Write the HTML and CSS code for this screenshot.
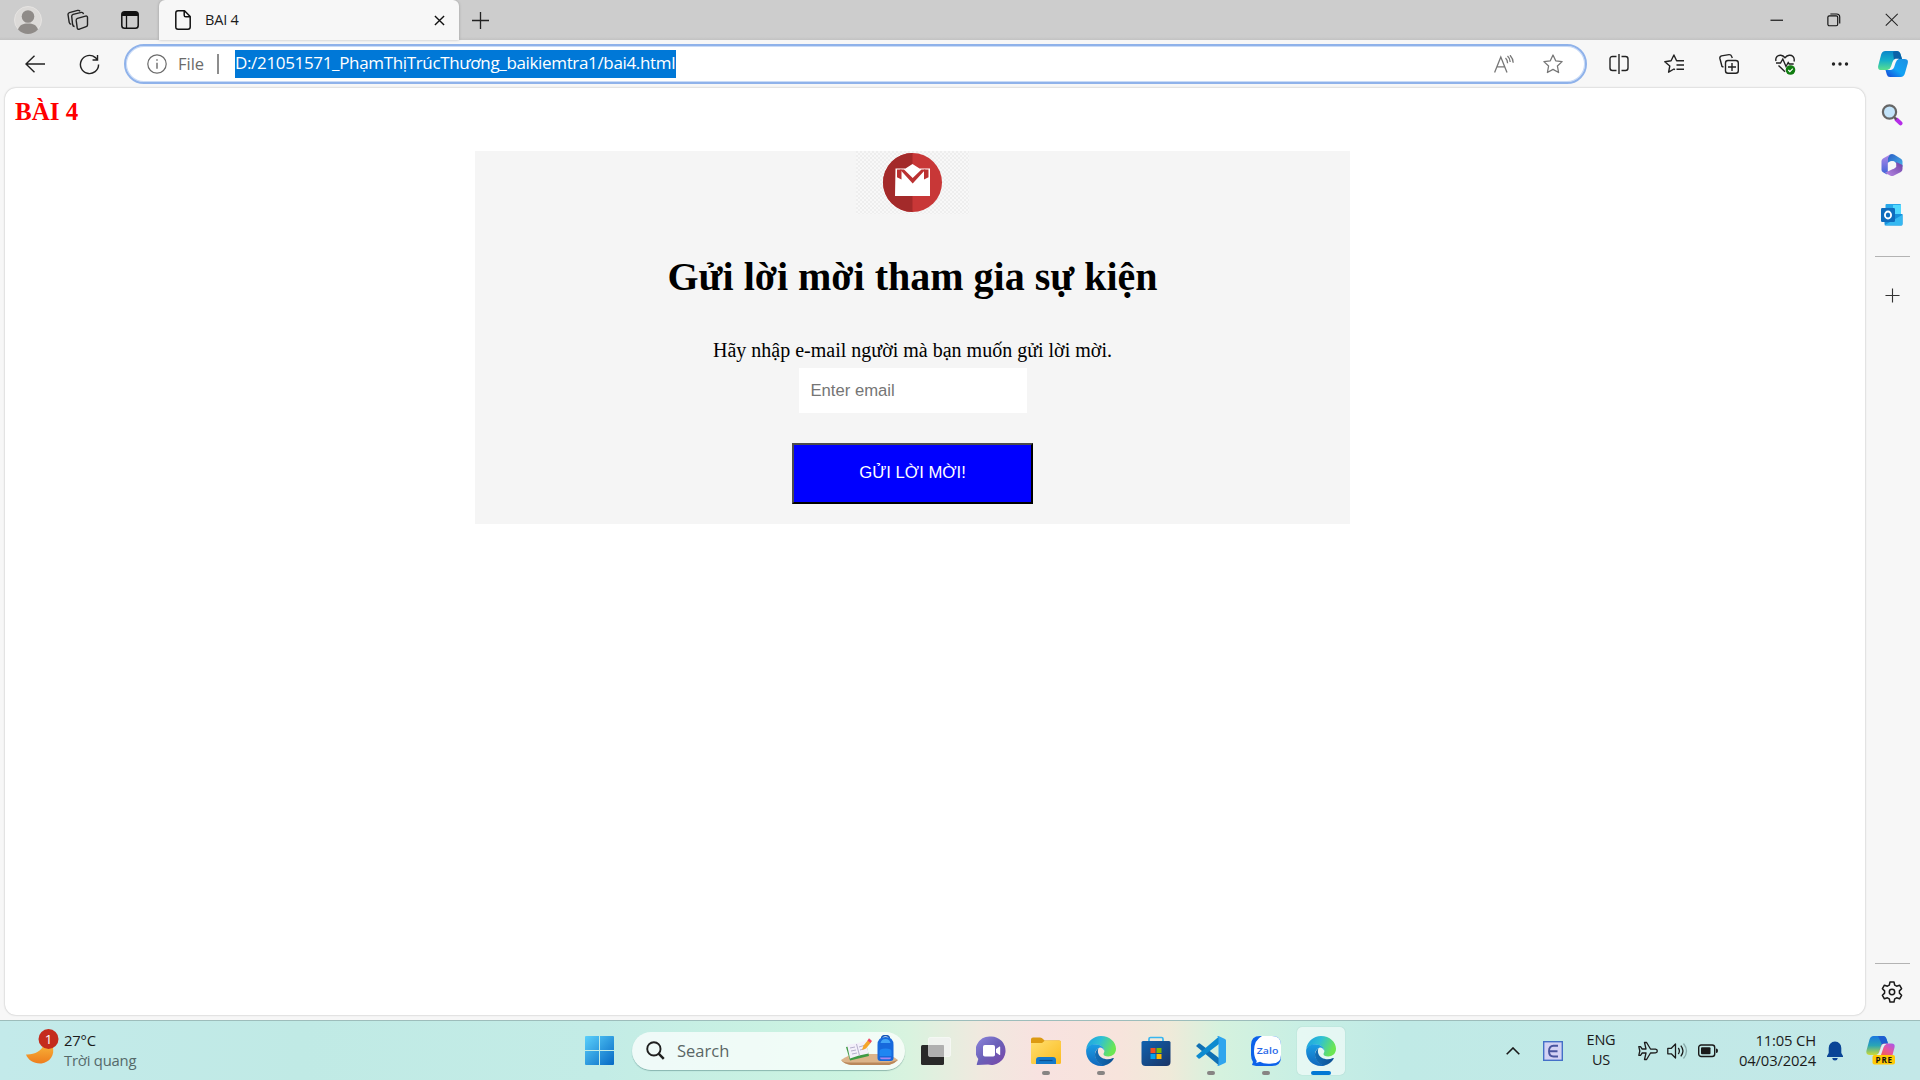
FILE: index.html
```html
<!DOCTYPE html>
<html lang="vi">
<head>
<meta charset="utf-8">
<title>BAI 4</title>
<link rel="stylesheet" href="styles.css">
</head>
<body>
<svg class="defs" width="0" height="0" aria-hidden="true">
  <defs>
    <linearGradient id="edgeTop" x1="0" y1="0" x2="1" y2=".35"><stop offset="0" stop-color="#1b9de2"/><stop offset=".5" stop-color="#2fc0d5"/><stop offset="1" stop-color="#6be653"/></linearGradient>
    <linearGradient id="edgeLeft" x1="0" y1="0" x2="0" y2="1"><stop offset="0" stop-color="#1b9fe5"/><stop offset="1" stop-color="#1168bd"/></linearGradient>
    <linearGradient id="edgeBottom" x1="0" y1="0" x2="1" y2="0"><stop offset="0" stop-color="#1370b8"/><stop offset="1" stop-color="#0c4f92"/></linearGradient>
    <linearGradient id="win" gradientUnits="userSpaceOnUse" x1="0" y1="0" x2="29" y2="29"><stop offset="0" stop-color="#5ad0fb"/><stop offset="1" stop-color="#0669c4"/></linearGradient>
    <linearGradient id="copA" x1="0" y1="0" x2="0" y2="1"><stop offset="0" stop-color="#0a86c9"/><stop offset=".5" stop-color="#16b0c9"/><stop offset="1" stop-color="#5be08d"/></linearGradient>
    <linearGradient id="copB" x1="0" y1="1" x2="1" y2="0"><stop offset="0" stop-color="#1443d6"/><stop offset=".45" stop-color="#12a3f5"/><stop offset="1" stop-color="#1d8fe0"/></linearGradient>
    <linearGradient id="preA" x1="0" y1="0" x2="0" y2="1"><stop offset="0" stop-color="#1a78e0"/><stop offset=".5" stop-color="#2aa5b5"/><stop offset="1" stop-color="#cddb35"/></linearGradient>
    <linearGradient id="preB" x1="0" y1="1" x2="1" y2="0"><stop offset="0" stop-color="#f5603b"/><stop offset=".5" stop-color="#e8569c"/><stop offset="1" stop-color="#a557f0"/></linearGradient>
    <linearGradient id="moon" x1="0" y1="0" x2="0" y2="1"><stop offset="0" stop-color="#f8b53a"/><stop offset="1" stop-color="#ee7d1d"/></linearGradient>
    <linearGradient id="folder" x1="0" y1="0" x2="1" y2="1"><stop offset="0" stop-color="#ffdf70"/><stop offset="1" stop-color="#fbbb1f"/></linearGradient>
    <linearGradient id="chat" x1="0" y1="0" x2="1" y2="1"><stop offset="0" stop-color="#8d86dd"/><stop offset=".5" stop-color="#6a60b8"/><stop offset="1" stop-color="#7a45a8"/></linearGradient>
    <linearGradient id="store" x1="0" y1="0" x2="1" y2="1"><stop offset="0" stop-color="#0f62b0"/><stop offset="1" stop-color="#1b3566"/></linearGradient>
    <linearGradient id="m365a" x1="0" y1="0" x2="0" y2="1"><stop offset="0" stop-color="#b388e8"/><stop offset="1" stop-color="#3b63d8"/></linearGradient>
    <linearGradient id="m365b" x1="0" y1="0" x2="1" y2="1"><stop offset="0" stop-color="#2a5dc6"/><stop offset="1" stop-color="#47b4ea"/></linearGradient>
    <linearGradient id="m365c" x1="0" y1="1" x2="1" y2="0"><stop offset="0" stop-color="#b98be6"/><stop offset="1" stop-color="#6b3fa4"/></linearGradient>
    <pattern id="checks" width="4" height="4" patternUnits="userSpaceOnUse"><rect width="4" height="4" fill="#f8f8f8"/><path d="M0 0h2v2H0zM2 2h2v2H2z" fill="#eeeeee"/></pattern>
    <symbol id="edge" viewBox="0 0 30 30">
      <path d="M0.2 13.5C1 5.5 7.500 0 15 0c8.800 0 15 6.200 15 12.800 0 5-3.800 7.700-7.800 7.700-3.200 0-4.700-1.200-4.700-2.400 0-1 .9-1.300.9-3.100C18.400 11.500 14.500 8.500 9.800 8.500 5 8.500 1.500 11 .2 13.500z" fill="url(#edgeTop)"/>
      <path d="M.2 13.500C2 9.500 5.500 8.200 9.300 8.200c5 0 9.100 3.300 9.100 6.800-1-2.500-3-3.800-5-3.300-3 1-5 4.300-4.300 8.100C10 25 14 28.500 19 29.400 17.800 29.900 16.500 30 15 30 6 30-.8 22.500.2 13.500z" fill="url(#edgeLeft)"/>
      <path d="M12.500 12.200c-2.500 1.800-4 5-3.400 8.200C10 25.500 14.500 29 18.500 29.500c4-.9 7.500-3.500 9.200-6.700.3-.6-.2-.9-.7-.7-6 2.900-13 .3-14.600-4.300-.8-2.200-.5-4.100.1-5.600z" fill="url(#edgeBottom)"/>
    </symbol>
  </defs>
</svg>

<div class="browser">
  <header class="tabstrip">
    <svg class="avatar" viewBox="0 0 28 28"><circle cx="14" cy="14" r="13.500" fill="#dcdad8" stroke="#e6e4e2"/><circle cx="14" cy="10.500" r="6.300" fill="#8f8b88"/><path d="M4 23.500c1.500-4.500 5-6 10-6s8.500 1.500 10 6A13.600 13.600 0 0 1 14 28a13.600 13.600 0 0 1-10-4.500z" fill="#8f8b88"/></svg>
    <svg class="workspaces" viewBox="0 0 22 22" fill="none" stroke="#222" stroke-width="1.400" stroke-linejoin="round"><path d="M10.500 9.300l8-2.200q2-.4 2 1.400v7.500q0 1.200-1.300 1.600l-6.800 2.600q-2 .5-2.200-1.300l-1-7.500q-.1-1.700 1.300-2.100z"/><path d="M7.600 17.500Q6 17.500 5.600 15.500L4.700 7.300q0-1.500 1.400-1.900l8.200-2q1.700-.3 2.200 1.700M4.200 15.200q-1.600 0-2-1.900L1 5.500q0-1.500 1.400-1.900l8.200-2.200q1.700-.3 2.500 1"/></svg>
    <svg class="tabmenu" viewBox="0 0 18 18"><rect x=".8" y=".8" width="16.400" height="16.400" rx="2.800" fill="none" stroke="#111" stroke-width="1.500"/><path d="M1 5V3.500Q1 1 3.500 1h11Q17 1 17 3.500V5z" fill="#111"/><path d="M5.500 5v12" stroke="#111" stroke-width="1.300"/></svg>
    <div class="tab">
      <svg class="doc" viewBox="0 0 16 20" fill="none" stroke="#111" stroke-width="1.500" stroke-linejoin="round"><path d="M3 .8h6.500L15.200 6.500V17q0 2.200-2.200 2.200H3Q.8 19.200.8 17V3Q.8.800 3 .8zM9.200 1v4.200q0 1.600 1.600 1.600H15"/></svg>
      <span class="tab-title">BAI 4</span>
      <svg class="tab-close" viewBox="0 0 12 12" stroke="#111" stroke-width="1.500"><path d="M1 1l10 10M11 1L1 11"/></svg>
    </div>
    <svg class="newtab" viewBox="0 0 18 18" stroke="#222" stroke-width="1.400"><path d="M9 0v18M0 9h18"/></svg>
    <div class="window-buttons">
      <svg viewBox="0 0 14 14"><path d="M.5 7.500h13" stroke="#111" stroke-width="1.200"/></svg>
      <svg viewBox="0 0 14 14" fill="none" stroke="#111" stroke-width="1.200"><rect x=".9" y="3" width="10.200" height="10.200" rx="1.500"/><path d="M3.500 1h6.500q3.200 0 3.200 3.200v6.600"/></svg>
      <svg viewBox="0 0 14 14" stroke="#222" stroke-width="1.100"><path d="M.8.800l12.400 12.400M13.200.8L.8 13.200"/></svg>
    </div>
  </header>

  <nav class="toolbar">
    <svg class="back" viewBox="0 0 20 18" fill="none" stroke="#222" stroke-width="1.400"><path d="M20 9H1M9.500.8L1 9l8.500 8.200"/></svg>
    <svg class="reload" viewBox="0 0 22 22" fill="none" stroke="#222" stroke-width="1.500"><path d="M20.500 11A9.500 9.500 0 1 1 17.200 3.800L19 5.700M19.400 1v5.200h-5.200"/></svg>
    <div class="address">
      <svg class="info" viewBox="0 0 20 20" fill="none" stroke="#6b6b6b" stroke-width="1.200"><circle cx="10" cy="10" r="9.200"/><path d="M10 8.700v6M10 5.200v1.600" stroke-width="1.400"/></svg>
      <span class="scheme">File</span>
      <span class="divider"></span>
      <span class="url">D:/21051571_PhạmThịTrúcThương_baikiemtra1/bai4.html</span>
      <svg class="aloud" viewBox="0 0 20 18" fill="none" stroke="#777" stroke-width="1.300"><path d="M.6 17.500L6.800 2l6.200 15.500M3 11.800h7.600M11.500 3q2 1.800 2.100 5.200M13.500.9q2.700 2.400 2.700 6M16 .2q3.200 3.500 3.200 7.500"/></svg>
      <svg class="star" viewBox="0 0 20 20" fill="none" stroke="#777" stroke-width="1.300" stroke-linejoin="round"><path d="M10 1l2.700 5.800 6.400.8-4.700 4.400 1.200 6.500-5.600-3.100-5.600 3.100 1.200-6.500L.9 7.600l6.400-.8z"/></svg>
    </div>
    <div class="tools">
      <svg viewBox="0 0 20 20" fill="none" stroke="#222" stroke-width="1.400"><path d="M7.500 2.500h-4Q1 2.500 1 5v9q0 2.500 2.500 2.500h4M12.500 2.500h4Q19 2.500 19 5v9q0 2.500-2.500 2.500h-4M10 0v20"/></svg>
      <svg viewBox="0 0 20 20" fill="none" stroke="#222" stroke-width="1.400" stroke-linejoin="round"><path d="M11 15.600l-1-.6-5.400 3.200L5.800 12 .8 7.700l6.300-.9L9.900 1l2.700 5.800h7.400M12.500 11H20M12.500 15.300H20"/></svg>
      <svg viewBox="0 0 20 20" fill="none" stroke="#222" stroke-width="1.400"><rect x="6.500" y="6.500" width="12.800" height="12.800" rx="2.500"/><path d="M13 9v8M9 13h8M4.500 13.200L3 12.500.9 4.500Q.5 2.500 2.500 1.900L10 .6Q12 .5 12.700 2.500L13.300 4"/></svg>
      <svg viewBox="0 0 20 20"><path d="M1 7Q.2 4.500 2 2.500C4 .5 7.500.8 10 3.700 12.500.8 16 .5 18 2.500Q19.800 4.500 19 7.500M1 9h4.500l2.300-4 3.200 7.500 2.200-4 1 1.500h4.500M3.500 11.500l6.500 6.300" fill="none" stroke="#222" stroke-width="1.400"/><circle cx="15.500" cy="16" r="4.800" fill="#107c10"/><path d="M13.300 16l1.600 1.600 2.900-3" fill="none" stroke="#fff" stroke-width="1.200"/></svg>
      <svg viewBox="0 0 20 20" fill="#222"><circle cx="3.500" cy="10" r="1.700"/><circle cx="10" cy="10" r="1.700"/><circle cx="16.500" cy="10" r="1.700"/></svg>
    </div>
    <svg class="copilot" viewBox="0 0 30 26"><path d="M7.500 0H19q2.500 0 3.300 2.500L24 8h-5q-3 0-4 3.500l-1.500 4.500q-1 3-4 3H3.500Q-.8 19 .3 14.500L3 4q1-4 4.500-4z" fill="url(#copA)"/><path d="M15 1q1-1 4-1 2.500 0 3.300 2.500L24 8h-5q-2 0-3 1.500z" fill="#0b62a8"/><path d="M22.500 26H12q-2.500 0-3.200-2.500L7.500 19h3q3 0 4-3.500l1.700-4.800Q17 8 20 8h6.500q4.300 0 3.200 4.500L27 22q-1 4-4.500 4z" fill="url(#copB)"/><path d="M17.500 7.800H21q-2.500 1-3.400 4l-1.500 4.500q-.8 2.700-3.100 2.700H9.500q2.500-.5 3.500-3.500l1.500-4.500q1-2.800 3-3.200z" fill="#f7f7f7"/></svg>
  </nav>

  <div class="workspace">
    <main class="page">
      <h2 class="page-title">BÀI 4</h2>
      <form class="invite">
        <svg class="logo" viewBox="0 0 113 63"><rect width="113" height="63" fill="url(#checks)"/><circle cx="56.500" cy="31.500" r="29.500" fill="#c83737"/><path d="M56.500 2a29.500 29.500 0 0 0 0 59z" fill="#a32a2a"/><path d="M39.500 17.500h10L56.500 13l7 4.500h10.500V45h-35z" fill="#fff"/><path d="M41 18.500h4.500v10L41 26.200zM72.500 18.500H68v10l4.500-2.300z" fill="#bb3131"/><path d="M44 18.500h4L56.700 27l8.800-8.500h4L56.700 32.500z" fill="#bb3131"/></svg>
        <h1 class="headline">Gửi lời mời tham gia sự kiện</h1>
        <p class="hint">Hãy nhập e-mail người mà bạn muốn gửi lời mời.</p>
        <input class="email" type="text" placeholder="Enter email">
        <button class="send" type="button">GỬI LỜI MỜI!</button>
      </form>
    </main>
    <aside class="sidebar">
      <svg class="side-search" viewBox="0 0 22 22"><path d="M15.500 15.500l4 3.800" stroke="#b52de8" stroke-width="4" stroke-linecap="round"/><path d="M13 13l2.500 2.500" stroke="#555" stroke-width="2"/><circle cx="8.500" cy="8" r="6.600" fill="#c3e4fa" stroke="#666" stroke-width="2.200"/></svg>
      <svg class="side-365" viewBox="0 0 22 22"><path d="M9 .5L2 4.500Q.5 5.500.5 7v9q0 1.500 1.500 2.300l3.500 1.900q1.300.6 1.300-1V9.500Q6.800 8 8 7.300L11 5.500z" fill="url(#m365a)"/><path d="M9 .6q2-1.200 4 0l6.500 3.800Q21.500 5.500 21.500 7.500V13l-6-3.500L13 7.500 7 8.500 7 4z" fill="url(#m365b)"/><path d="M21.500 11v4q0 2-1.600 3L13 21.500q-2 1-4 0l-5-2.800 8-3.700 3.200-2V8z" fill="url(#m365c)"/><circle cx="11" cy="11" r="3.900" fill="#f7f7f7"/></svg>
      <svg class="side-outlook" viewBox="0 0 22 22"><rect x="4.500" y="0" width="15.500" height="14" rx="1" fill="#28a8ea"/><path d="M12 1h8v9h-8z" fill="#50d9ff"/><path d="M3.500 10h18v10q0 1.500-1.500 1.500H5q-1.500 0-1.500-1.500z" fill="#1690dc"/><path d="M3.500 21.300l18-10.500V20q0 1.500-1.500 1.500z" fill="#35b8f1"/><rect y="4" width="14" height="14" rx="1.200" fill="#0f6cbd"/><ellipse cx="7" cy="11" rx="3.100" ry="3.500" fill="none" stroke="#fff" stroke-width="1.800"/></svg>
      <span class="rule"></span>
      <svg class="side-plus" viewBox="0 0 16 16" stroke="#333" stroke-width="1.200"><path d="M8 .5v15M.5 8h15"/></svg>
      <span class="rule rule-bottom"></span>
      <svg class="gear" viewBox="0 0 22 22" fill="none" stroke="#1a1a1a" stroke-width="1.500" stroke-linejoin="round"><path d="M9 1h4l.7 3.100 1.900 1.100 3-1 2 3.500-2.200 2.200v2.200l2.200 2.200-2 3.500-3-1-1.900 1.100L13 21H9l-.7-3.100-1.900-1.100-3 1-2-3.500 2.200-2.200V9.900L1.400 7.700l2-3.500 3 1 1.900-1.100z"/><circle cx="11" cy="11" r="2.700"/></svg>
    </aside>
  </div>
</div>

<footer class="taskbar">
  <div class="weather">
    <svg class="weather-icon" viewBox="0 0 34 38"><path d="M26.500 10c3 9-3 16.500-11 17.500C8 28 2 24 0 18.500 8 19 16 15 18 8z" transform="translate(0 7)" fill="url(#moon)"/><circle cx="22.500" cy="10" r="10" fill="#c42b1c"/><text class="badge-text" x="22.700" y="15" text-anchor="middle">1</text></svg>
    <div class="weather-text"><span>27°C</span><span class="dim">Trời quang</span></div>
  </div>
  <div class="apps">
    <svg class="start" viewBox="0 0 29 29" fill="url(#win)"><path d="M1 0h13v14H0V1q0-1 1-1zM15 0h13q1 0 1 1v13H15zM0 15h14v14H1q-1 0-1-1zM15 15h14v13q0 1-1 1H15z"/></svg>
    <div class="search">
      <svg class="search-icon" viewBox="0 0 20 20" fill="none" stroke="#1f1f1f" stroke-width="2"><circle cx="8.300" cy="8.300" r="7"/><path d="M13.300 13.300l5.400 5.400" stroke-width="2.600"/></svg>
      <span class="search-label">Search</span>
      <svg class="doodle" viewBox="0 0 57 32"><path d="M0 25q8-6 17-6h25q9 1 15 6-4 4-9 5H10q-7-1-10-5z" fill="#dcb48a"/><path d="M0 25q3 3 8 2.500h40l9-2.500q-4 4-9 5H10q-7-1-10-5z" fill="#b9875a"/><path d="M5 12l20-4 3 13-19 4.500z" fill="#3f9b45"/><path d="M6 9.500l9-1 10-3 2.500 13-9.500 2-9 3z" fill="#f3f0fa"/><path d="M15.500 9l3 11.500M9 13l5-1M10 16l5-1M11 19l5-1M18 12l5-1.500M19 15l5-1.500" stroke="#b5b0cc" fill="none"/><path d="M21 15l1.500-4.500L27 5l3 2.500-5 6z" fill="#f4a52a"/><path d="M26.500 5.500l1.500-2.200 3 2.600-1.500 2z" fill="#ee4964"/><path d="M40.500 4q0-3.500 4-3.500t4 3.500" fill="none" stroke="#1554b8" stroke-width="1.400"/><path d="M36.500 10q0-8 8-8t8 8v13q0 3-3 3h-10q-3 0-3-3z" fill="#1769dc"/><path d="M39.500 8q1-4 5-4t5 4z" fill="#42a5f7"/><path d="M38.500 16q0-2.500 6-2.500t6 2.500v5h-12z" fill="#1f86f2"/><path d="M39 22.500h11q0 1.800-1.500 1.800h-8Q39 24.300 39 22.500z" fill="#a985ed"/></svg>
    </div>
    <svg class="taskview" viewBox="0 0 30 28"><rect y="8" width="23" height="20" rx="1.500" fill="#292929"/><rect x="7.500" y=".5" width="22" height="19" rx="1.500" fill="#f4f4f4" fill-opacity=".78" stroke="#fff" stroke-opacity=".5"/><path d="M7.500 8H23v11.500H7.500z" fill="#999" fill-opacity=".5"/></svg>
    <div class="app"><svg viewBox="0 0 30 30"><path d="M15 .5a14.200 14.200 0 1 1-3 28L1.500 29q-1 0-.7-1l1.500-5A14.200 14.200 0 0 1 15 .5z" fill="url(#chat)"/><rect x="7" y="9" width="12" height="11.500" rx="1.800" fill="#fff"/><path d="M20 13l3.500-2.500q.7-.2.700.6v7.400q0 .8-.7.500L20 16.500z" fill="#fff"/></svg></div>
    <div class="app open"><svg viewBox="0 0 30 30"><path d="M0 3.500q0-2 2-2h7q2 0 3 1.500l1.500 1.500H28q2 0 2 2v5H0z" fill="#dc9a12"/><path d="M0 7h11l3-2.500h14.500Q30 4.500 30 6V26.500q0 1.500-1.500 1.500h-27Q0 28 0 26.500z" fill="url(#folder)"/><path d="M5 28v-4q0-3 3-3h14q3 0 3 3v4z" fill="#1579ca"/><path d="M8.500 24.500h13" stroke="#0a4f91" stroke-width="1.200"/></svg></div>
    <div class="app open"><svg><use href="#edge"/></svg></div>
    <div class="app"><svg viewBox="0 0 30 30"><path d="M8 6V3q0-1.500 1.500-1.500h11Q22 1.500 22 3v3" fill="none" stroke="#38b6f0" stroke-width="1.700"/><path d="M.5 6.500Q.5 5 2 5h26q1.500 0 1.500 1.500V26q0 4-4 4h-21q-4 0-4-4z" fill="url(#store)"/><path d="M9.500 12h5v5h-5z" fill="#f25022"/><path d="M15.500 12h5v5h-5z" fill="#7fba00"/><path d="M9.500 18h5v5h-5z" fill="#00a4ef"/><path d="M15.500 18h5v5h-5z" fill="#ffb900"/></svg></div>
    <div class="app open"><svg viewBox="0 0 30 30"><path d="M0 10l2.500-2.500q.8-.5 1.700.2L23 22v7.500z" fill="#1070b3"/><path d="M0 20l2.500 2.500q.8.500 1.700-.2L23 8V.5z" fill="#0d8bd0"/><path d="M22.500 0l6.500 3q1 .5 1 1.500v21q0 1-1 1.500l-6.500 3q-1 .3-1.500-.5 1.500.3 1.500-1.500V2Q22.500.3 21 .5q.5-.8 1.500-.5z" fill="#30a5ee"/></svg></div>
    <div class="app open"><svg viewBox="0 0 30 30"><path d="M9 0h12q9 0 9 9v12q0 9-9 9H5l-4-1 1-3q-2-3-2-7V9Q0 0 9 0z" fill="#0b62ea"/><path d="M11 0h10q9 0 9 9v10q0 8.500-9 8.500-8 .8-12-1.700L5 27q1-1 .5-2.500Q3 21 3 15 3 4 11 0z" fill="#fff"/><text class="zalo-text" x="5.800" y="17.500" textLength="21.500" lengthAdjust="spacingAndGlyphs">Zalo</text></svg></div>
    <div class="app open active"><svg><use href="#edge"/></svg></div>
  </div>
  <div class="tray">
    <svg class="chevron" viewBox="0 0 14 8" fill="none" stroke="#1a1a1a" stroke-width="1.600"><path d="M.7 7.300L7 1l6.300 6.300"/></svg>
    <svg class="unikey" viewBox="0 0 20 20"><rect x=".7" y=".7" width="18.600" height="18.600" fill="#d3d2f4" stroke="#4470c8" stroke-width="1.400"/><path d="M15 4.800h-4.500Q6 5 6 10.200t4.500 5.300H15M6 10.200h8.500" fill="none" stroke="#49559f" stroke-width="1.900"/></svg>
    <div class="lang"><span>ENG</span><span>US</span></div>
    <svg class="plane" viewBox="0 0 20 20" fill="none" stroke="#1c1c1c" stroke-width="1.300" stroke-linejoin="round"><path d="M12.500 8l5 .1q1.800.2 1.800 1.900t-1.800 1.900l-5 .1-3.900 6.500H6.500L8 12H4.200l-1.700 2.300H.8L1.800 10 .8 5.700h1.700L4.200 8H8L6.500 1.500h2.100z"/></svg>
    <svg class="speaker" viewBox="0 0 21 18" fill="none" stroke="#1c1c1c" stroke-width="1.300" stroke-linejoin="round"><path d="M.8 6.300h3.500L8.500 2v14l-4.200-4.200H.8zM11.300 6q2.200 3 0 6M13.800 3.700q4.300 5.300 0 10.600"/><path d="M16.500 1.500q6 7.500 0 15" stroke="#8aa"/></svg>
    <svg class="battery" viewBox="0 0 20 14"><rect x=".7" y="1" width="16" height="11.500" rx="2.500" fill="none" stroke="#1a1a1a" stroke-width="1.400"/><rect x="3" y="3.200" width="9.500" height="7.100" rx="1" fill="#1a1a1a"/><path d="M18 4.500q2 0 2 2.300T18 9z" fill="#1a1a1a"/></svg>
    <div class="clock"><span>11:05 CH</span><span>04/03/2024</span></div>
    <svg class="bell" viewBox="0 0 16 20" fill="#0a4596"><path d="M8 .5q6 .5 6.300 6.500v5L16 15v1H0v-1l1.700-3V7Q2 1 8 .5zM5.200 17h5.600Q10.500 19.500 8 19.500T5.200 17z"/></svg>
    <svg class="copilot-pre" viewBox="0 0 30 29"><path d="M7.500 0H17q2.500 0 3.500 3l1.500 4.500h-3q-3 0-4 3l-1.800 5.500q-1 3-4 3H4q-4.500 0-3.500-4.500l3-11Q4.500 0 7.500 0z" fill="url(#preA)"/><path d="M12 0h5q2.500 0 3.500 3l1.500 4.500h-3q-2 0-3 1z" fill="#1d5ed0"/><path d="M18 7.500h7.500q4 0 3 4L26.500 19H12l3-9q.8-2.500 3-2.500z" fill="url(#preB)"/><path d="M17 8h3.500q-2 .5-3 3.500L15 19h-4q1.500-.8 2.200-3l1.800-5q.7-2.500 2-3z" fill="#dcf3f2"/><rect x="6.500" y="19" width="22.500" height="9.500" rx="2" fill="#ffc905"/><text class="pre-text" x="9.500" y="26.500" textLength="16.500">PRE</text></svg>
  </div>
</footer>
</body>
</html>
```
FILE: styles.css
```css
* { box-sizing: border-box; }

body {
  margin: 0;
  width: 1920px;
  height: 1080px;
  overflow: hidden;
  display: flex;
  flex-direction: column;
  background: #f7f7f7;
  color: #1b1b1b;
  font-family: "Open Sans", "Noto Sans", sans-serif;
}

svg { display: block; flex: none; }
.defs { height: 0; }

/* Browser window */
.browser { height: 1020px; display: flex; flex-direction: column; }

.tabstrip {
  height: 40px;
  flex: none;
  display: flex;
  align-items: center;
  background: linear-gradient(#cdcdcd 92%, #c2c2c2);
  padding-left: 14px;
}
.avatar { width: 28px; height: 28px; }
.workspaces { width: 22px; height: 22px; margin-left: 25px; }
.tabmenu { width: 18px; height: 18px; margin-left: 32px; }
.tab {
  width: 300px;
  height: 40px;
  margin-left: 20px;
  padding-left: 16px;
  display: flex;
  align-items: center;
  background: #f7f7f7;
  border-radius: 6px 6px 0 0;
  box-shadow: 0 0 3px rgba(0, 0, 0, .25);
}
.doc { width: 16px; height: 20px; }
.tab-title { margin-left: 14px; width: 229px; padding-bottom: 2px; font-size: 14.500px; letter-spacing: -.2px; }
.tab-close { width: 11px; height: 11px; }
.newtab { width: 17px; height: 17px; margin-left: 13px; }
.window-buttons { margin-left: auto; padding-right: 22px; display: flex; gap: 44px; }
.window-buttons svg { width: 13.500px; height: 13.500px; }

.toolbar {
  height: 48px;
  flex: none;
  display: flex;
  align-items: center;
  padding-left: 25px;
}
.back { width: 20px; height: 18px; }
.reload { width: 21px; height: 21px; margin-left: 34px; }
.address {
  width: 1463px;
  height: 40px;
  margin-left: 24px;
  padding-left: 21px;
  display: flex;
  align-items: center;
  background: #fff;
  border: 2px solid #8fb2ea;
  box-shadow: inset 0 0 0 1px #c9dbf7;
  border-radius: 20px;
}
.info { width: 20px; height: 20px; }
.scheme { width: 39px; margin-left: 11px; padding-bottom: 2px; color: #6b6b6b; font-size: 16.500px; }
.divider { width: 2px; height: 20px; background: #8d8d8d; }
.url {
  width: 441px;
  height: 28px;
  margin-left: 16px;
  line-height: 26px;
  background: #0078d7;
  color: #fff;
  font-size: 17px;
  letter-spacing: -.34px;
  white-space: nowrap;
}
.aloud { width: 20px; height: 18px; margin-left: 818px; }
.star { width: 20px; height: 20px; margin-left: 29px; }
.tools { margin-left: 22px; display: flex; gap: 35.200px; }
.tools svg { width: 20px; height: 20px; overflow: visible; }
.copilot { width: 30px; height: 26px; margin-left: 28px; }

.workspace { flex: 1; display: flex; padding: 0 0 5px 5px; }
.page {
  width: 1860px;
  padding: 9px 10px;
  background: #fff;
  border-radius: 11px;
  box-shadow: 0 0 2px rgba(0, 0, 0, .3);
  font-family: "Liberation Serif", "Times New Roman", serif;
  color: #000;
}
.page-title { margin: 0; font-size: 25px; line-height: 30px; color: red; }
.invite {
  width: 875px;
  height: 373px;
  margin: 24px 0 0 460px;
  display: flex;
  flex-direction: column;
  align-items: center;
  background: #f5f5f5;
}
.logo { width: 113px; height: 63px; }
.headline { margin: 40px 0 0; font-size: 40px; line-height: 46px; white-space: nowrap; }
.hint { margin: 38px 0 0; font-size: 20px; line-height: 24px; white-space: nowrap; }
.email {
  width: 228px;
  height: 45px;
  margin-top: 6px;
  padding: 0 12px;
  border: 0;
  background: #fff;
  font: 16.670px "Liberation Sans", Arial, sans-serif;
}
.email::placeholder { color: #757575; }
.send {
  width: 241px;
  height: 61px;
  margin-top: 30px;
  padding: 0 0 2px;
  border: 2px outset #000;
  border-color: #4c4c4c #000 #000 #4c4c4c;
  background: #00f;
  color: #fff;
  font: 16.670px "Liberation Sans", Arial, sans-serif;
}

.sidebar { flex: 1; display: flex; flex-direction: column; align-items: center; padding: 0 1px 12px 0; }
.side-search { width: 22px; height: 22px; margin-top: 16px; }
.side-365 { width: 22px; height: 22px; margin-top: 28px; }
.side-outlook { width: 22px; height: 22px; margin-top: 28px; }
.rule { width: 35px; height: 1px; margin-top: 30px; background: #b3b3b3; }
.side-plus { width: 15px; height: 15px; margin-top: 31px; }
.rule-bottom { margin-top: auto; }
.gear { width: 22px; height: 22px; margin-top: 17px; }

/* Taskbar */
.taskbar {
  height: 60px;
  display: flex;
  align-items: center;
  border-top: 1px solid #9dbdbb;
  background: linear-gradient(90deg, #c3eaea 0, #c0eae5 300px, #c3ece6 600px, #ccf4e0 850px, #d9f3df 910px, #f0e9df 980px, #f8e2e0 1040px, #f7e4dc 1120px, #efead9 1170px, #d5f2de 1220px, #c8efe4 1300px, #c0eae6 1400px, #c3e8e8 1920px);
}
.weather { width: 545px; flex: none; margin-right: 40px; padding-left: 26px; display: flex; align-items: center; }
.weather-icon { width: 34px; height: 38px; margin-top: -5px; }
.badge-text { fill: #fff; font-size: 13.500px; }
.weather-text { margin-left: 4px; padding-bottom: 2px; display: flex; flex-direction: column; font-size: 14.800px; line-height: 20px; }
.weather-text span { letter-spacing: -.2px; }
.dim { color: #55696a; }

.apps { width: 768px; flex: none; display: flex; align-items: center; }
.start { width: 29px; height: 29px; }
.search {
  width: 273px;
  height: 38px;
  flex: none;
  margin-left: 18px;
  padding-left: 14px;
  display: flex;
  align-items: center;
  border-radius: 19px;
  background: rgba(255, 255, 255, .72);
  box-shadow: 0 1px 1px rgba(60, 110, 110, .45);
}
.search-icon { width: 19px; height: 19px; }
.search-label { width: 164px; margin-left: 12px; color: #5a6665; font-size: 16.500px; }
.doodle { width: 57px; height: 32px; }
.taskview { width: 30px; height: 28px; margin: 0 16px 0 16px; }
.app {
  position: relative;
  width: 48px;
  height: 48px;
  margin-right: 7px;
  display: flex;
  flex: none;
  align-items: center;
  justify-content: center;
  border-radius: 5px;
}
.app svg { width: 30px; height: 30px; }
.open::after {
  content: "";
  position: absolute;
  bottom: 0;
  left: 20px;
  width: 8px;
  height: 4px;
  border-radius: 2px;
  background: #878483;
}
.active { background: rgba(255, 255, 255, .55); box-shadow: 0 0 1px rgba(0, 80, 80, .3); }
.active::after { left: 14px; width: 20px; background: #0078d4; }
.zalo-text { fill: #2767e8; font: 600 9px "Open Sans", sans-serif; }

.tray { margin-left: auto; padding-right: 24px; display: flex; align-items: center; }
.chevron { width: 14px; height: 8px; margin-right: 23px; }
.unikey { width: 20px; height: 20px; margin-right: 23px; }
.lang { width: 30px; padding-bottom: 1px; display: flex; flex-direction: column; align-items: center; font-size: 14.500px; line-height: 20px; letter-spacing: -.2px; }
.plane { width: 20px; height: 20px; margin-left: 22px; }
.speaker { width: 21px; height: 18px; margin-left: 9px; }
.battery { width: 20px; height: 14px; margin-left: 10px; }
.clock { width: 98px; padding-bottom: 2px; display: flex; flex-direction: column; align-items: flex-end; font-size: 14.800px; line-height: 20px; letter-spacing: -.15px; }
.bell { width: 16px; height: 20px; margin-left: 11px; }
.copilot-pre { width: 30px; height: 29px; margin-left: 23px; }
.pre-text { fill: #111; font: bold 8px "Open Sans", sans-serif; }
```
